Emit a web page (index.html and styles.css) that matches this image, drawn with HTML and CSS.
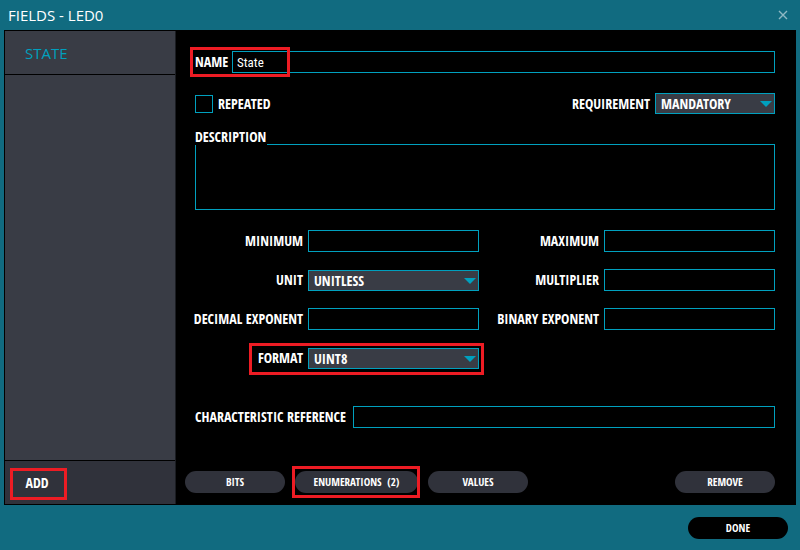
FILE: index.html
```
<!DOCTYPE html>
<html lang="en">
<head>
<meta charset="utf-8">
<title>Fields - LED0</title>
<link rel="stylesheet" href="styles.css">
</head>
<body>
<div class="dialog">
  <header class="titlebar">
    <h1>FIELDS - LED0</h1>
    <button class="close" type="button" aria-label="Close">
      <svg viewBox="0 0 10 10" width="10" height="10" aria-hidden="true"><path d="M1 1L9 9M9 1L1 9"/></svg>
    </button>
  </header>

  <main class="content">
    <aside class="sidebar">
      <nav class="list"><a class="item" href="#state">STATE</a></nav>
      <div class="sidebar-footer">
        <button class="add highlight" type="button">ADD</button>
      </div>
    </aside>

    <form class="form" id="state">
      <div class="row name-row">
        <label for="name">NAME</label>
        <input id="name" type="text" value="State">
        <span class="mark mark-name"></span>
      </div>

      <div class="row options-row">
        <input id="repeated" type="checkbox">
        <label for="repeated">REPEATED</label>
        <label class="push" for="requirement">REQUIREMENT</label>
        <span class="select requirement">
          <select id="requirement"><option>MANDATORY</option><option>OPTIONAL</option></select>
          <svg viewBox="0 0 12 6" width="12" height="6" aria-hidden="true"><path d="M0 0H12L6 6Z"/></svg>
        </span>
      </div>

      <div class="description">
        <label for="description">DESCRIPTION</label>
        <textarea id="description"></textarea>
      </div>

      <div class="grid">
        <label for="minimum">MINIMUM</label>
        <input id="minimum" type="text">
        <label for="maximum">MAXIMUM</label>
        <input id="maximum" type="text">

        <label for="unit">UNIT</label>
        <span class="select">
          <select id="unit"><option>UNITLESS</option></select>
          <svg viewBox="0 0 12 6" width="12" height="6" aria-hidden="true"><path d="M0 0H12L6 6Z"/></svg>
        </span>
        <label for="multiplier">MULTIPLIER</label>
        <input id="multiplier" type="text">

        <label for="decimal">DECIMAL EXPONENT</label>
        <input id="decimal" type="text">
        <label for="binary">BINARY EXPONENT</label>
        <input id="binary" type="text">

        <label for="format">FORMAT</label>
        <span class="select">
          <select id="format"><option>UINT8</option></select>
          <svg viewBox="0 0 12 6" width="12" height="6" aria-hidden="true"><path d="M0 0H12L6 6Z"/></svg>
          <span class="mark mark-format"></span>
        </span>
      </div>

      <div class="row reference-row">
        <label for="reference">CHARACTERISTIC REFERENCE</label>
        <input id="reference" type="text">
      </div>

      <div class="actions">
        <button class="pill" type="button">BITS</button>
        <button class="pill wide" type="button">ENUMERATIONS &nbsp;(2)<span class="mark mark-pill"></span></button>
        <button class="pill" type="button">VALUES</button>
        <button class="pill push" type="button">REMOVE</button>
      </div>
    </form>
  </main>

  <footer class="footer">
    <button class="pill done" type="button">DONE</button>
  </footer>
</div>
</body>
</html>
```
FILE: styles.css
```
:root {
  --teal: #116b80;
  --cyan: #00a0be;
  --panel: #393c45;
  --panel-dark: #30323b;
  --red: #ed1c24;
  --condensed: "Open Sans Condensed", "Roboto Condensed", "Open Sans", sans-serif;
}

* { box-sizing: border-box; }

body {
  margin: 0;
  background: var(--teal);
  color: #fff;
  font: bold 14px/20px var(--condensed);
}

.dialog {
  display: flex;
  flex-direction: column;
  min-height: 100vh;
}

.titlebar {
  display: flex;
  align-items: center;
  justify-content: space-between;
  height: 30px;
  padding: 0 12px 0 8px;
}

h1 {
  margin: 0;
  font: 400 15px/20px "Open Sans", sans-serif;
}

button, input, select, textarea {
  margin: 0;
  padding: 0;
  border: 0;
  border-radius: 0;
  outline: 0;
  background: none;
  color: inherit;
  font: inherit;
}

label { white-space: nowrap; }

.close { display: flex; }
.close svg { fill: none; stroke: #8fb9c4; stroke-width: 1.4; }

.content {
  display: flex;
  flex: 1;
  margin: 0 4px;
  padding: 1px 0 1px 1px;
  background: #000;
}

.sidebar {
  display: flex;
  flex: 0 0 171px;
  flex-direction: column;
  border-right: 1px solid #1b1d22;
  background: var(--panel);
}

.list { flex: 1; }

.item {
  display: block;
  padding: 12px 20px 11px;
  border-bottom: 1px solid #000;
  color: var(--cyan);
  font: 400 15px/20px "Open Sans", sans-serif;
  text-decoration: none;
}

.sidebar-footer {
  padding: 7px 5px 4px;
  border-top: 1px solid #000;
  background: var(--panel-dark);
}

.add {
  width: 57px;
  height: 32px;
  padding: 0 3px 2px 0;
}

.highlight { border: 3px solid var(--red); }

.form {
  display: flex;
  flex: 1;
  flex-direction: column;
  padding: 20px 21px 11px 19px;
}

.row {
  display: flex;
  align-items: center;
  gap: 5px;
}

.form input[type="text"] {
  flex: 1;
  width: 100%;
  min-width: 0;
  height: 22px;
  padding: 0 4px;
  border: 1px solid var(--cyan);
  font: 400 13px/20px "Roboto Condensed", sans-serif;
}

.name-row { position: relative; }
.name-row label { width: 32px; }
.reference-row label { width: 153px; }

.mark {
  position: absolute;
  border: 3px solid var(--red);
  pointer-events: none;
}

.mark-name {
  top: -4px;
  left: -5px;
  width: 100px;
  height: 30px;
}

.mark-format {
  top: -5px;
  right: -5px;
  width: 235px;
  height: 32px;
}

.mark-pill {
  inset: -5px -2px -5px -3px;
}

.options-row { margin-top: 20px; }

input[type="checkbox"] {
  appearance: none;
  width: 18px;
  height: 18px;
  border: 1px solid var(--cyan);
}

.push { margin-left: auto; }

.select {
  position: relative;
  display: block;
}

.select select {
  display: block;
  appearance: none;
  width: 100%;
  height: 21px;
  padding: 0 20px 0 5px;
  border: 1px solid var(--cyan);
  background: var(--panel);
}

.select svg {
  position: absolute;
  top: 8px;
  right: 3px;
  fill: var(--cyan);
  pointer-events: none;
}

.requirement { width: 120px; }

.description {
  position: relative;
  margin-top: 30px;
}

.description label {
  position: absolute;
  top: -17px;
  left: 0;
  padding-right: 1px;
  background: #000;
  line-height: 20px;
  height: 18px;
}

.description textarea {
  display: block;
  width: 100%;
  height: 66px;
  padding: 4px;
  border: 1px solid var(--cyan);
  font: 400 13px/20px "Roboto Condensed", sans-serif;
  resize: none;
}

.grid {
  display: grid;
  grid-template-columns: 108px 1fr 115px 1fr;
  grid-auto-rows: 22px;
  align-items: center;
  gap: 17px 5px;
  margin: 20px 0 37px;
}

.grid label { justify-self: end; }

.actions {
  display: flex;
  gap: 10px;
  margin: auto 0 0 -10px;
}

.pill {
  position: relative;
  width: 100px;
  height: 22px;
  border-radius: 11px;
  background: var(--panel-dark);
  font-size: 11px;
}

.wide { width: 123px; }

.footer {
  display: flex;
  justify-content: flex-end;
  padding: 12px 12px 11px;
}

.done { background: #000; }
```
